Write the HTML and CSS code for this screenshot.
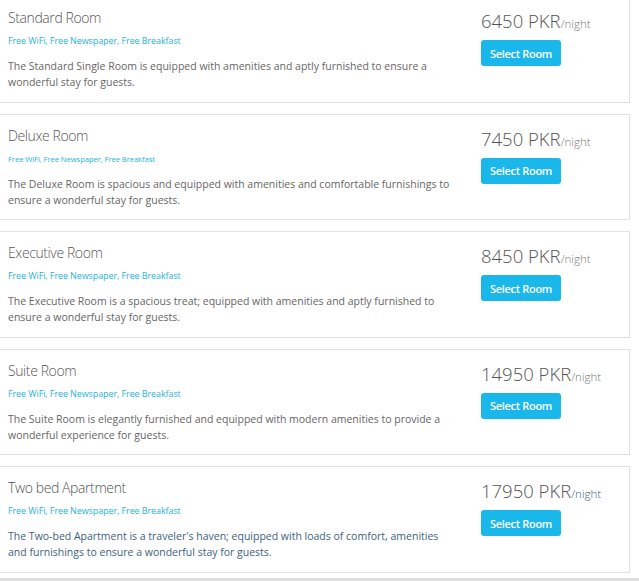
FILE: index.html
```html
<!DOCTYPE html>
<html>
<head>
<meta charset="utf-8">
<link rel="stylesheet" href="styles.css">
</head>
<body>
<div class="rooms">
  <div class="room">
    <div class="info">
      <div class="title">Standard Room</div>
      <div class="amen">Free WiFi, Free Newspaper, Free Breakfast</div>
      <div class="desc">The Standard Single Room is equipped with amenities and aptly furnished to ensure a wonderful stay for guests.</div>
    </div>
    <div class="book">
      <div class="price">6450 PKR<span class="per">/night</span></div>
      <button class="btn">Select Room</button>
    </div>
  </div>
  <div class="room">
    <div class="info">
      <div class="title">Deluxe Room</div>
      <div class="amen amen-sm">Free WiFi, Free Newspaper, Free Breakfast</div>
      <div class="desc">The Deluxe Room is spacious and equipped with amenities and comfortable furnishings to ensure a wonderful stay for guests.</div>
    </div>
    <div class="book">
      <div class="price">7450 PKR<span class="per">/night</span></div>
      <button class="btn">Select Room</button>
    </div>
  </div>
  <div class="room">
    <div class="info">
      <div class="title">Executive Room</div>
      <div class="amen">Free WiFi, Free Newspaper, Free Breakfast</div>
      <div class="desc">The Executive Room is a spacious treat; equipped with amenities and aptly furnished to ensure a wonderful stay for guests.</div>
    </div>
    <div class="book">
      <div class="price">8450 PKR<span class="per">/night</span></div>
      <button class="btn">Select Room</button>
    </div>
  </div>
  <div class="room">
    <div class="info">
      <div class="title">Suite Room</div>
      <div class="amen">Free WiFi, Free Newspaper, Free Breakfast</div>
      <div class="desc">The Suite Room is elegantly furnished and equipped with modern amenities to provide a wonderful experience for guests.</div>
    </div>
    <div class="book">
      <div class="price">14950 PKR<span class="per">/night</span></div>
      <button class="btn">Select Room</button>
    </div>
  </div>
  <div class="room room-active">
    <div class="info">
      <div class="title">Two bed Apartment</div>
      <div class="amen">Free WiFi, Free Newspaper, Free Breakfast</div>
      <div class="desc">The Two-bed Apartment is a traveler's haven; equipped with loads of comfort, amenities and furnishings to ensure a wonderful stay for guests.</div>
    </div>
    <div class="book">
      <div class="price">17950 PKR<span class="per">/night</span></div>
      <button class="btn">Select Room</button>
    </div>
  </div>
</div>
<div class="footer-edge"></div>
</body>
</html>
```
FILE: styles.css
```css
html, body {
  margin: 0;
  padding: 0;
  background: #ffffff;
  font-family: "Open Sans", "Liberation Sans", sans-serif;
}
.rooms {
  margin-top: -4px;
  margin-left: -1px;
  width: 631px;
  display: flex;
  flex-direction: column;
  gap: 11px;
}
.room {
  border: 1px solid #e2e2e2;
  padding: 11px 8px 11.5px 8px;
  display: flex;
  background: #fff;
}
.info {
  width: 465px;
  flex: none;
}
.title {
  font-size: 14px;
  font-weight: 300;
  line-height: 20px;
  color: #555;
  letter-spacing: -0.4px;
}
.amen {
  margin-top: 6px;
  font-size: 9px;
  line-height: 14px;
  color: #1fb3e0;
  letter-spacing: -0.1px;
}
.amen-sm {
  font-size: 7.7px;
}
.desc {
  margin-top: 10px;
  font-size: 10.5px;
  line-height: 16px;
  color: #666;
  width: 446px;
}
.room-active .desc {
  color: #3d5f80;
}
.book {
  padding-left: 8px;
}
.price {
  font-size: 18.5px;
  font-weight: 300;
  line-height: 26px;
  height: 26px;
  color: #555;
  white-space: nowrap;
}
.per {
  font-size: 11.5px;
  line-height: 1;
  color: #777;
}
.room-active .per {
  color: #3d5f80;
}
.btn {
  display: block;
  margin-top: 6px;
  width: 80px;
  height: 26px;
  border: none;
  border-radius: 3px;
  background: #1ab8ea;
  color: #fff;
  font-family: "Open Sans", "Liberation Sans", sans-serif;
  font-size: 11px;
  font-weight: 600;
  padding: 0;
  letter-spacing: -0.3px;
}
.footer-edge {
  margin-top: 5px;
  height: 4px;
  background: #dedede;
}
```
